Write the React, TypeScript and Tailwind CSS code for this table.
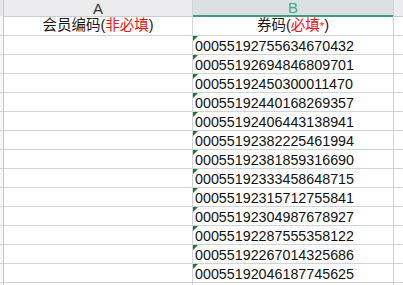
import React from 'react';

const CODES = [
  '00055192755634670432',
  '00055192694846809701',
  '00055192450300011470',
  '00055192440168269357',
  '00055192406443138941',
  '00055192382225461994',
  '00055192381859316690',
  '00055192333458648715',
  '00055192315712755841',
  '00055192304987678927',
  '00055192287555358122',
  '00055192267014325686',
  '00055192046187745625',
  '',
];

const cols = 'grid grid-cols-[4px_189px_201px_1fr]';

export default function App() {
  return (
    <div
      className="w-[403px] h-[285px] overflow-hidden bg-white text-[#1a1a1a]"
      style={{ fontFamily: '"Liberation Sans", "Noto Sans CJK SC", sans-serif' }}
    >
      {/* Column headers */}
      <div className={`${cols} h-[16px]`}>
        <div className="bg-[#e6e6e8] border-r border-[#c4c7cc] border-b border-b-[#c9ccd1]" />
        <div className="bg-[#ececee] border-r border-[#d0d3d8] border-b border-b-[#c9ccd1] flex items-center justify-center text-[15px] leading-none text-[#333]">
          A
        </div>
        <div className="bg-[#dde0e2] border-r border-[#d0d3d8] border-b-2 border-b-[#3e9f74] flex items-center justify-center text-[15px] leading-none text-[#4aa97c]">
          B
        </div>
        <div className="bg-[#ececee] border-b border-b-[#c9ccd1]" />
      </div>

      {/* Title row */}
      <div className={`${cols} h-[20px]`}>
        <div className="bg-[#f7f7f8] border-r border-[#c4c7cc] border-b border-b-[#d0d3d8]" />
        <div className="border-r border-b border-[#d0d3d8] flex items-center justify-center text-[14.5px] leading-none">
          <span>
            会员编码(<span className="text-[#f01010]">非必填</span>)
          </span>
        </div>
        <div className="border-r border-b border-[#d0d3d8] flex items-center justify-center text-[14.5px] leading-none">
          <span>
            券码(<span className="text-[#f01010]">必填<span className="text-[11px]">*</span></span>)
          </span>
        </div>
        <div className="border-b border-[#d0d3d8]" />
      </div>

      {/* Data rows */}
      {CODES.map((code, i) => (
        <div key={i} className={`${cols} h-[19px]`}>
          <div className="bg-[#f7f7f8] border-r border-[#c4c7cc] border-b border-b-[#d0d3d8]" />
          <div className="border-r border-b border-[#d0d3d8]" />
          <div className="relative border-r border-b border-[#d0d3d8] flex items-center pl-[2px] text-[14.3px] leading-none text-[#111]">
            {code && (
              <span className="absolute left-0 top-0 w-0 h-0 border-t-[5px] border-r-[5px] border-t-[#1c7a34] border-r-transparent" />
            )}
            <span className="pt-[3px]">{code}</span>
          </div>
          <div className="border-b border-[#d0d3d8]" />
        </div>
      ))}
    </div>
  );
}
